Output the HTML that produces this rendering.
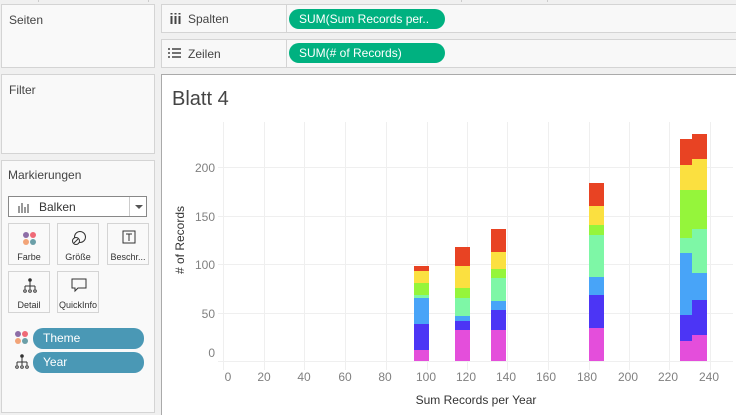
<!DOCTYPE html>
<html><head><meta charset="utf-8"><style>
*{margin:0;padding:0;box-sizing:border-box}
body{width:736px;height:414px;overflow:hidden;background:#f0f0f0;font-family:"Liberation Sans",Arial,sans-serif;position:relative;color:#333}
.a{position:absolute}
.box{position:absolute;background:#f9f9f9;border:1px solid #d4d4d4}
.lbl{font-size:12px;color:#444}
.pill{position:absolute;background:#00b180;color:#fff;font-size:12px;border-radius:10px;height:20px;line-height:20px;padding-left:10px}
.btn{position:absolute;width:42px;height:42px;border:1px solid #d4d4d4;background:#f9f9f9;font-size:9px;text-align:center;color:#333}
.btn span{position:absolute;left:0;right:0;top:28px}
.tp{position:absolute;background:#4a98b5;color:#fff;font-size:12px;border-radius:10px;height:21px;line-height:21px;padding-left:10px;width:111px;left:31px}
</style></head><body>
<div class="a" style="left:38px;top:0;width:1px;height:2px;background:#ccc"></div>
<div class="a" style="left:148px;top:0;width:1px;height:2px;background:#ccc"></div>
<div class="a" style="left:461px;top:0;width:1px;height:2px;background:#ccc"></div>
<div class="a" style="left:547px;top:0;width:1px;height:2px;background:#ccc"></div>

<div class="box" style="left:1px;top:4px;width:154px;height:64px"><div class="lbl a" style="left:7px;top:8px">Seiten</div></div>
<div class="box" style="left:1px;top:74px;width:154px;height:80px"><div class="lbl a" style="left:7px;top:8px">Filter</div></div>
<div class="box" style="left:1px;top:160px;width:154px;height:253px">
<div class="lbl a" style="left:6px;top:7px">Markierungen</div>
<div class="a" style="left:6px;top:35px;width:139px;height:21px;border:1px solid #888;background:#fff;font-size:12px">
<svg class="a" style="left:9px;top:4px" width="14" height="12"><path d="M1 5v7M4 2v10M7 6v6M10 3v9" stroke="#333" stroke-width="1"/></svg>
<span class="a" style="left:30px;top:3px">Balken</span>
<div class="a" style="left:120px;top:0;width:1px;height:19px;background:#ccc"></div>
<svg class="a" style="left:126px;top:8px" width="8" height="5"><path d="M0 0h8L4 4z" fill="#555"/></svg></div>
<div class="btn" style="left:6px;top:62px"><svg class="a" style="left:13px;top:7px" width="16" height="16"><circle cx="4" cy="4" r="3" fill="#8e6ea7"/><circle cx="11" cy="4" r="3" fill="#ef6a77"/><circle cx="4" cy="11" r="3" fill="#f2a478"/><circle cx="11" cy="11" r="3" fill="#6b9fa8"/></svg><span>Farbe</span></div>
<div class="btn" style="left:55px;top:62px"><svg class="a" style="left:13px;top:6px" width="16" height="16"><circle cx="9" cy="7" r="5.5" fill="none" stroke="#333"/><circle cx="5" cy="11" r="3.5" fill="#f9f9f9" stroke="#333"/><path d="M3 13l4-4" stroke="#333"/></svg><span>Größe</span></div>
<div class="btn" style="left:105px;top:62px;width:42px"><svg class="a" style="left:14px;top:6px" width="14" height="14"><rect x="1" y="1" width="12" height="12" fill="none" stroke="#333"/><path d="M4 4h6M7 4v7" stroke="#333"/></svg><span>Beschr...</span></div>
<div class="btn" style="left:6px;top:110px"><svg class="a" style="left:13px;top:6px" width="16" height="16"><circle cx="8" cy="2" r="1.8" fill="#333"/><path d="M8 3v5M3 8h10M3 8v3M8 8v3M13 8v3" stroke="#333"/><circle cx="3" cy="13" r="1.3" fill="none" stroke="#333"/><circle cx="8" cy="13" r="1.3" fill="none" stroke="#333"/><circle cx="13" cy="13" r="1.3" fill="none" stroke="#333"/></svg><span>Detail</span></div>
<div class="btn" style="left:55px;top:110px"><svg class="a" style="left:13px;top:6px" width="16" height="16"><path d="M1 1h14v9H7l-3 3v-3H1z" fill="none" stroke="#333"/></svg><span>QuickInfo</span></div>
<svg class="a" style="left:12px;top:169px" width="16" height="16"><circle cx="4" cy="4" r="3" fill="#8e6ea7"/><circle cx="11" cy="4" r="3" fill="#ef6a77"/><circle cx="4" cy="11" r="3" fill="#f2a478"/><circle cx="11" cy="11" r="3" fill="#6b9fa8"/></svg>
<div class="tp" style="top:167px">Theme</div>
<svg class="a" style="left:12px;top:193px" width="16" height="16"><circle cx="8" cy="2" r="1.8" fill="#333"/><path d="M8 3v5M3 8h10M3 8v3M8 8v3M13 8v3" stroke="#333"/><circle cx="3" cy="13" r="1.3" fill="none" stroke="#333"/><circle cx="8" cy="13" r="1.3" fill="none" stroke="#333"/><circle cx="13" cy="13" r="1.3" fill="none" stroke="#333"/></svg>
<div class="tp" style="top:191px">Year</div>
</div>

<div class="box" style="left:161px;top:4px;width:576px;height:29px;background:#f8f8f8">
<div class="a" style="left:124px;top:0;width:1px;height:27px;background:#d4d4d4"></div>
<svg class="a" style="left:8px;top:8px" width="12" height="11"><path d="M1.5 0v1.5M1.5 3v8M5.5 0v1.5M5.5 3v8M9.5 0v1.5M9.5 3v8" stroke="#444" stroke-width="2"/></svg>
<span class="lbl a" style="left:26px;top:7px;font-size:12px">Spalten</span></div>
<div class="pill" style="left:289px;top:9px;width:156px">SUM(Sum Records per..</div>
<div class="box" style="left:161px;top:39px;width:576px;height:29px;background:#f8f8f8">
<div class="a" style="left:124px;top:0;width:1px;height:27px;background:#d4d4d4"></div>
<svg class="a" style="left:6px;top:8px" width="13" height="10"><path d="M0 1h2M4 1h9M0 5h2M4 5h9M0 9h2M4 9h9" stroke="#444" stroke-width="1.5"/></svg>
<span class="lbl a" style="left:26px;top:7px;font-size:12px">Zeilen</span></div>
<div class="pill" style="left:289px;top:43px;width:156px">SUM(# of Records)</div>

<div class="a" style="left:161px;top:74px;width:576px;height:341px;background:#fff;border:1px solid #aaa;border-right:none;border-bottom:none"></div>
<div class="a" style="left:172px;top:88px;font-size:20px;color:#444">Blatt 4</div>
<svg class="a" style="left:0;top:0" width="736" height="414" font-family="Liberation Sans, Arial, sans-serif">
<g stroke="#efefef" stroke-width="1">
<path d="M218 167.5H733M218 216.5H733M218 264.5H733M218 313.5H733M218 361.5H733"/>
<path d="M223.5 122V370M264.5 122V370M304.5 122V370M345.5 122V370M386.5 122V370M427.5 122V370M467.5 122V370M507.5 122V370M548.5 122V370M589.5 122V370M629.5 122V370M669.5 122V370M710.5 122V370"/>
</g>
<g>
<rect x="414" y="266" width="15" height="5" fill="#e84323"/><rect x="414" y="271" width="15" height="12" fill="#fbe040"/><rect x="414" y="283" width="15" height="12" fill="#95f53b"/><rect x="414" y="295" width="15" height="3" fill="#7ef7a6"/><rect x="414" y="298" width="15" height="26" fill="#48a4f8"/><rect x="414" y="324" width="15" height="26" fill="#4c35f5"/><rect x="414" y="350" width="15" height="11" fill="#e44edb"/>
<rect x="455" y="247" width="15" height="19" fill="#e84323"/><rect x="455" y="266" width="15" height="22" fill="#fbe040"/><rect x="455" y="288" width="15" height="10" fill="#95f53b"/><rect x="455" y="298" width="15" height="18" fill="#7ef7a6"/><rect x="455" y="316" width="15" height="5" fill="#48a4f8"/><rect x="455" y="321" width="15" height="9" fill="#4c35f5"/><rect x="455" y="330" width="15" height="31" fill="#e44edb"/>
<rect x="491" y="229" width="15" height="23" fill="#e84323"/><rect x="491" y="252" width="15" height="17" fill="#fbe040"/><rect x="491" y="269" width="15" height="9" fill="#95f53b"/><rect x="491" y="278" width="15" height="23" fill="#7ef7a6"/><rect x="491" y="301" width="15" height="9" fill="#48a4f8"/><rect x="491" y="310" width="15" height="20" fill="#4c35f5"/><rect x="491" y="330" width="15" height="31" fill="#e44edb"/>
<rect x="589" y="183" width="15" height="23" fill="#e84323"/><rect x="589" y="206" width="15" height="19" fill="#fbe040"/><rect x="589" y="225" width="15" height="10" fill="#95f53b"/><rect x="589" y="235" width="15" height="42" fill="#7ef7a6"/><rect x="589" y="277" width="15" height="18" fill="#48a4f8"/><rect x="589" y="295" width="15" height="33" fill="#4c35f5"/><rect x="589" y="328" width="15" height="33" fill="#e44edb"/>
<rect x="680" y="139" width="15" height="26" fill="#e84323"/><rect x="680" y="165" width="15" height="25" fill="#fbe040"/><rect x="680" y="190" width="15" height="48" fill="#95f53b"/><rect x="680" y="238" width="15" height="15" fill="#7ef7a6"/><rect x="680" y="253" width="15" height="62" fill="#48a4f8"/><rect x="680" y="315" width="15" height="26" fill="#4c35f5"/><rect x="680" y="341" width="15" height="20" fill="#e44edb"/>
<rect x="692" y="134" width="15" height="25" fill="#e84323"/><rect x="692" y="159" width="15" height="31" fill="#fbe040"/><rect x="692" y="190" width="15" height="39" fill="#95f53b"/><rect x="692" y="229" width="15" height="44" fill="#7ef7a6"/><rect x="692" y="273" width="15" height="27" fill="#48a4f8"/><rect x="692" y="300" width="15" height="35" fill="#4c35f5"/><rect x="692" y="335" width="15" height="26" fill="#e44edb"/>
</g>
<g font-size="12" fill="#808080" text-anchor="end">
<text x="215" y="172">200</text><text x="215" y="221">150</text><text x="215" y="269">100</text><text x="215" y="318">50</text><text x="215" y="357">0</text>
</g>
<g font-size="12" fill="#808080" text-anchor="middle">
<text x="228" y="381">0</text><text x="264" y="381">20</text><text x="304" y="381">40</text><text x="345" y="381">60</text><text x="385" y="381">80</text><text x="426" y="381">100</text><text x="466" y="381">120</text><text x="506" y="381">140</text><text x="546" y="381">160</text><text x="587" y="381">180</text><text x="628" y="381">200</text><text x="668" y="381">220</text><text x="709" y="381">240</text>
</g>
<text x="476" y="404" font-size="12" fill="#333" text-anchor="middle">Sum Records per Year</text>
<text transform="translate(184,240) rotate(-90)" font-size="12" fill="#333" text-anchor="middle">#  of Records</text>
</svg>
</body></html>
